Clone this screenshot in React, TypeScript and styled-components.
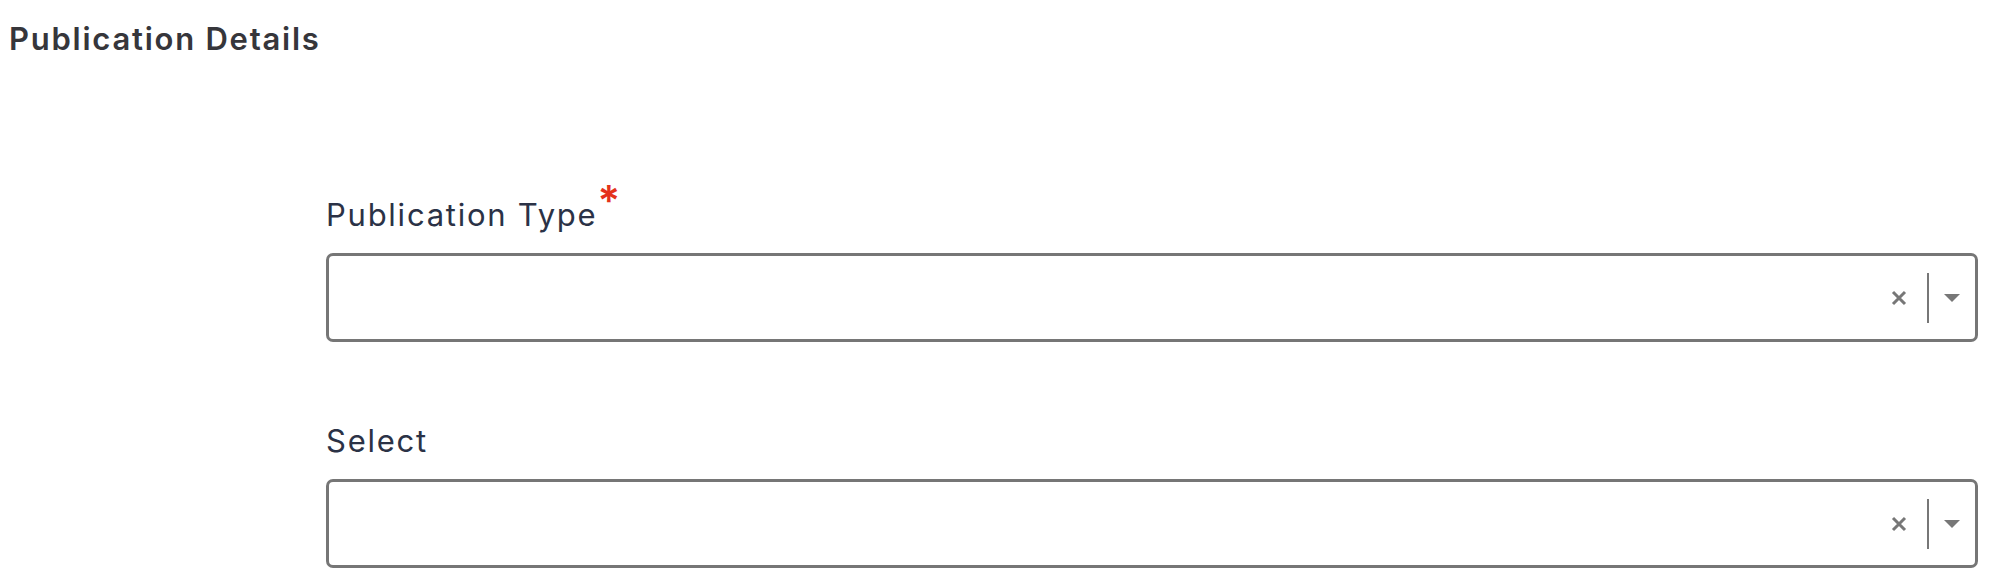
import React from 'react';
import styled, { createGlobalStyle } from 'styled-components';

const GlobalStyle = createGlobalStyle`
    body {
        margin: 0;
        background: #ffffff;
        font-family: Inter, "Open Sans", sans-serif;
    }
`;

const Page = styled.div`
    padding: 21px 24px 0 9px;
`;

const Title = styled.h2`
    margin: 0;
    font-size: 31px;
    line-height: 36px;
    font-weight: 600;
    color: #36363b;
    letter-spacing: 1.75px;
`;

const Form = styled.div`
    display: flex;
    flex-direction: column;
    gap: 81px;
    margin: 140px 0 0 317px;
`;

const Field = styled.div`
    display: flex;
    flex-direction: column;
    gap: 20px;
`;

const Label = styled.label`
    font-size: 31px;
    line-height: 36px;
    font-weight: 400;
    color: #2b3246;
    letter-spacing: 1.75px;
`;

const Required = styled.span`
    color: #e4321b;
    font-size: 42px;
    font-weight: 600;
    vertical-align: 10px;
    line-height: 0;
    letter-spacing: 0;
`;

const SelectBox = styled.div`
    box-sizing: border-box;
    height: 89px;
    border: 3px solid #767676;
    border-radius: 7px;
    display: flex;
    align-items: center;
    justify-content: flex-end;
    padding-right: 15px;
    background: #fff;
`;

const Indicators = styled.div`
    display: flex;
    align-items: center;
`;

const Clear = styled.span`
    display: flex;
    margin-right: 20px;
`;

const Separator = styled.span`
    width: 2px;
    height: 50px;
    background: #777777;
    margin-right: 15px;
`;

const Caret = styled.span`
    width: 0;
    height: 0;
    border-left: 8px solid transparent;
    border-right: 8px solid transparent;
    border-top: 8px solid #777777;
`;

const ClearIcon = () => (
    <svg width="16" height="16" viewBox="0 0 16 16">
        <path d="M2 2 L14 14 M14 2 L2 14" stroke="#777777" strokeWidth="3" strokeLinecap="butt" />
    </svg>
);

const SelectField = ({ label, required }: { label: string; required?: boolean }): JSX.Element => (
    <Field>
        <Label>
            {label}
            {required && <Required>*</Required>}
        </Label>
        <SelectBox>
            <Indicators>
                <Clear><ClearIcon /></Clear>
                <Separator />
                <Caret />
            </Indicators>
        </SelectBox>
    </Field>
);

const App = (): JSX.Element => {
    return (
        <>
            <GlobalStyle />
            <Page>
                <Title>Publication Details</Title>
                <Form>
                    <SelectField label="Publication Type" required />
                    <SelectField label="Select" />
                </Form>
            </Page>
        </>
    );
};

export default App;
